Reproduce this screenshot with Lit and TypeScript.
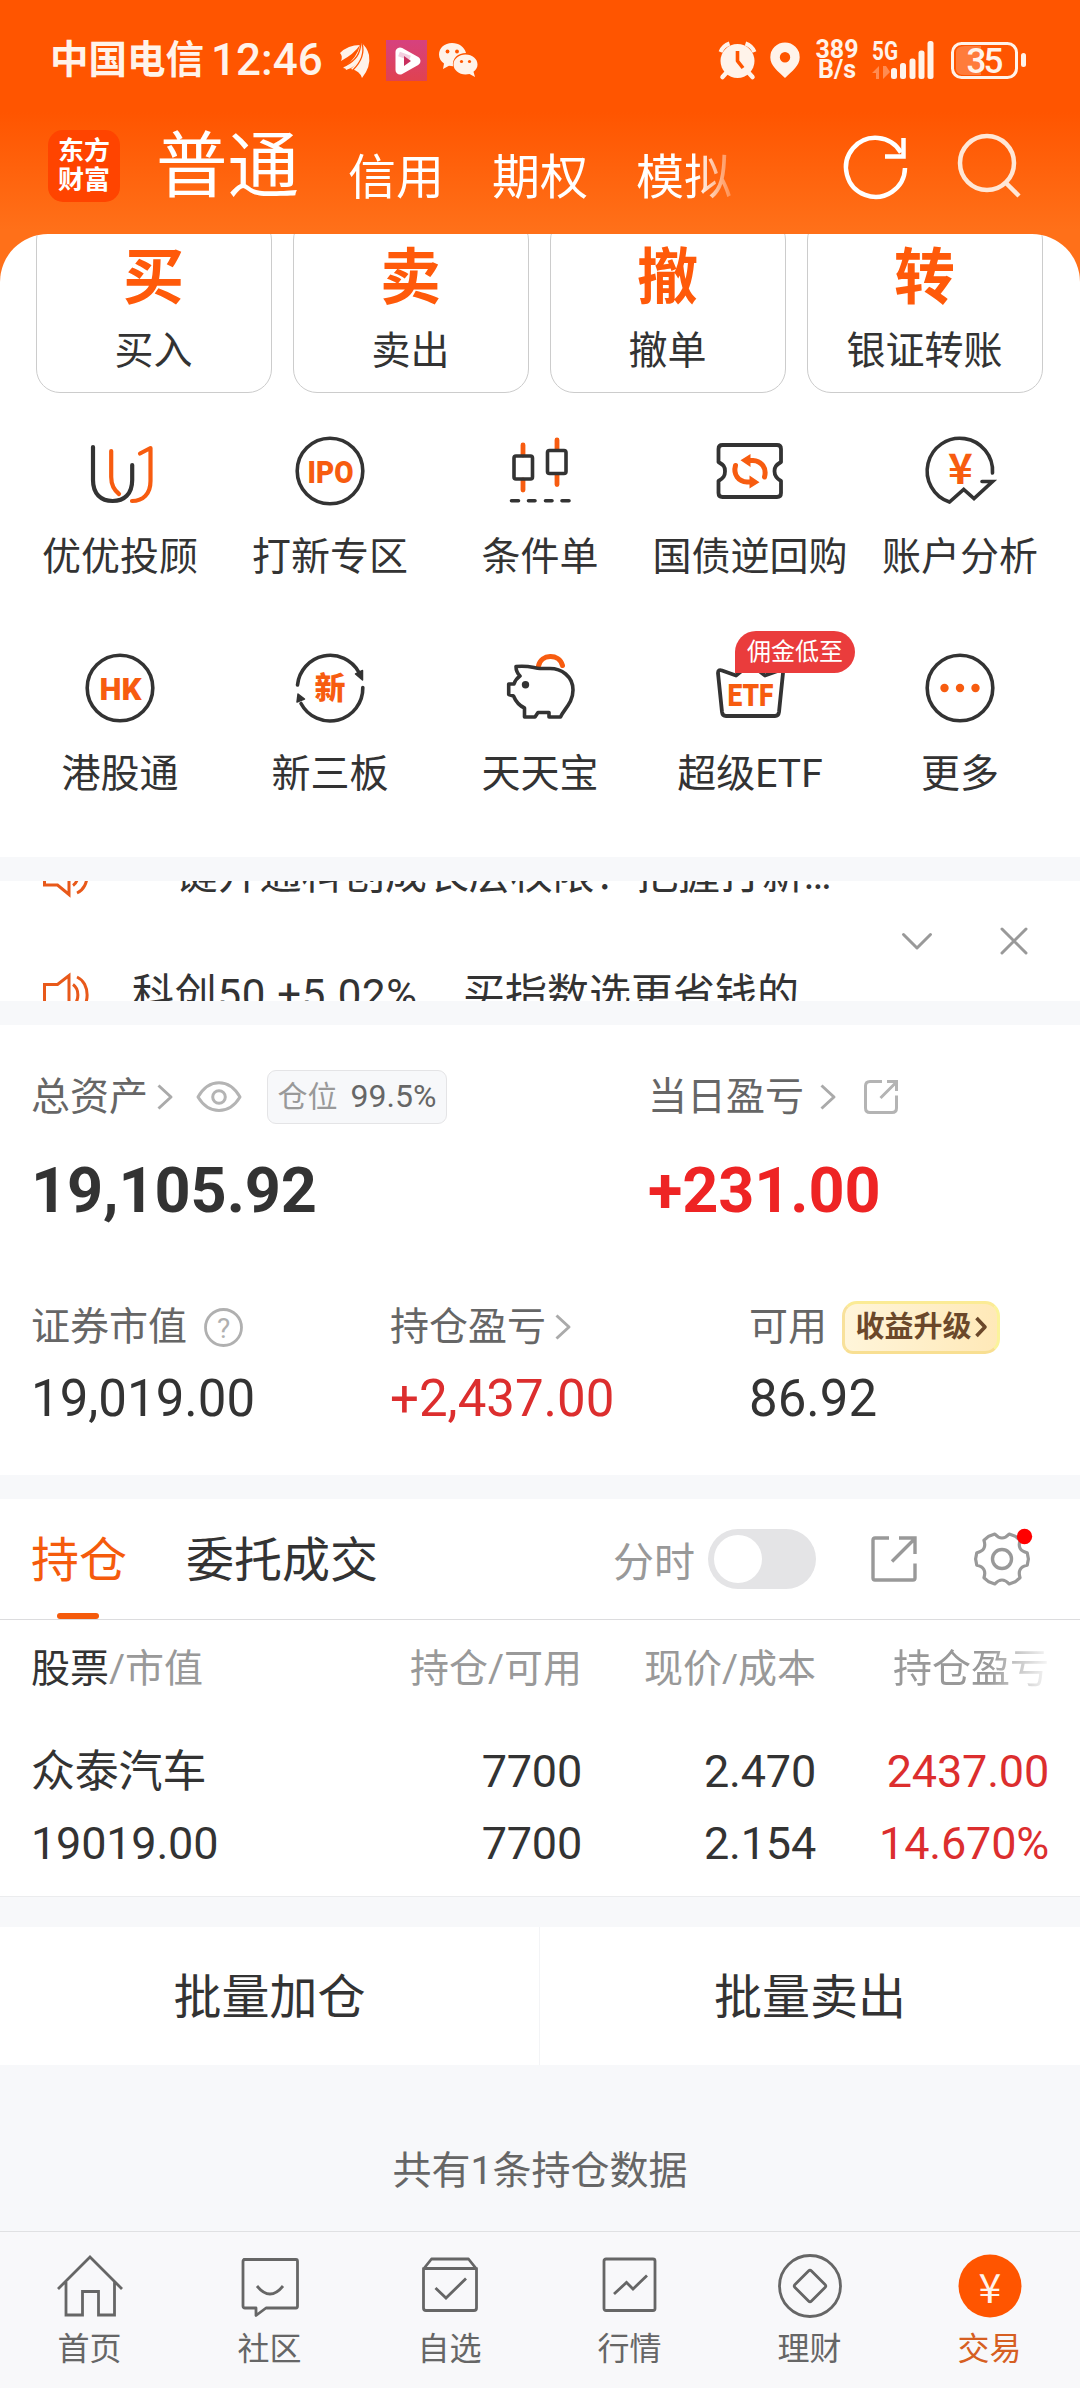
import { LitElement, html, svg, css, nothing, TemplateResult, SVGTemplateResult } from "lit";
import { customElement, property } from "lit/decorators.js";
import { classMap } from "lit/directives/class-map.js";

const base = css`
  :host {
    display: block;
    box-sizing: border-box;
    font-family: Roboto, "Noto Sans CJK SC", sans-serif;
    color: #333;
  }
  * {
    box-sizing: border-box;
  }
  svg {
    display: block;
    flex: none;
    fill: none;
    stroke-linecap: butt;
    stroke-linejoin: round;
    overflow: visible;
  }
  span {
    white-space: nowrap;
  }
`;

const glyph = (w: number, h: number, body: SVGTemplateResult, cls = ""): TemplateResult =>
  html`<svg class=${cls} width=${w} height=${h} viewBox="0 0 ${w} ${h}">${body}</svg>`;

const chevron = (color = "#aaa") =>
  glyph(16, 26, svg`<path d="M1.5 1.5 L14 13 L1.5 24.5" stroke=${color} stroke-width="3"/>`);

@customElement("status-bar")
export class StatusBar extends LitElement {
  static styles = [
    base,
    css`
      :host {
        display: flex;
        align-items: center;
        height: 120px;
        padding: 0 54px 0 50px;
        color: #fff3ea;
        --ink: #fff3ea;
      }
      .carrier {
        font-size: 38.5px;
        font-weight: 600;
        line-height: 60px;
      }
      .time {
        font-size: 44px;
        font-weight: 500;
        line-height: 60px;
        margin-left: 7px;
        width: 115px;
      }
      .wing { margin-left: 14px; }
      .play { margin-left: 16px; }
      .chat { margin-left: 12px; }
      .alarm { margin-left: auto; }
      .pin { margin-left: 14px; }
      .speed {
        display: flex;
        flex-direction: column;
        align-items: center;
        width: 46px;
        margin-left: 14px;
        font-size: 25px;
        font-weight: 700;
        line-height: 20px;
      }
      .signal { margin-left: 12px; }
      .battery { margin-left: 15px; }
      .net { font: 700 25px Roboto, sans-serif; fill: var(--ink); }
      .level { font: 500 35px Roboto, sans-serif; fill: var(--ink); }
    `,
  ];

  render() {
    const ink = "#fff3ea";
    return html`
      <span class="carrier">中国电信</span>
      <span class="time">12:46</span>
      ${glyph(30, 35, svg`<g fill=${ink}>
        <path d="M0 10 Q8 2 20 2 Q14 11 1 18 Q3 13 0 10Z"/>
        <path d="M3 25 Q17 16 20.500 .5 Q23 6 21 13 Q17 24 6 27 Q6 25 3 25Z"/>
        <path d="M11 26 Q22 16 21.500 0 Q27 4 29 12 Q31 24 22 35 Q20 28 11 26Z"/></g>
        <path d="M20.500 0 Q21 15 5 23 M22 0 Q26 14 13 27" stroke="#ff5500" stroke-width="1.300"/>`, "wing")}
      ${glyph(41, 41, svg`<defs><linearGradient id="pk" x1="0" y1="0" x2="0" y2="1"><stop offset="0" stop-color="#d6417f"/><stop offset="1" stop-color="#e04250"/></linearGradient></defs>
        <rect width="41" height="41" fill="url(#pk)"/>
        <path d="M14 12 V30 L30 21 Z" stroke="#fff" stroke-width="9"/>
        <path d="M13 14 L24 18" stroke="#f3cfe0" stroke-width="5"/>
        <path d="M18 16 V26 L25 21 Z" fill="#c9305f"/>`, "play")}
      ${glyph(39, 36, svg`<g fill=${ink}><path d="M13 1C5.500 1 0 6 0 12.500c0 4 2 7 5 9L4 27l6-3.200 4 .5C13 16 19 11 27 11 25.500 5 20 1 13 1Z"/>
        <path d="M26.500 12.500C20 12.500 14.500 17 14.500 22.500S20 32.500 26.500 32.500l4-.6 5.500 3-1.500-5.200c2.500-1.700 4-4.200 4-7.200 0-5.500-5-10-12-10Z"/></g>
        <g fill="#ff5500"><circle cx="8.500" cy="9.500" r="1.900"/><circle cx="18" cy="9.500" r="1.900"/><circle cx="22.500" cy="19.500" r="1.600"/><circle cx="30.500" cy="19.500" r="1.600"/></g>`, "chat")}
      ${glyph(37, 38, svg`<circle cx="18.500" cy="20" r="17" fill=${ink}/>
        <path d="M1.500 11 A15 15 0 0 1 10.500 2.500 M35.500 11 A15 15 0 0 0 26.500 2.500" stroke=${ink} stroke-width="4"/>
        <path d="M8 31 L3.500 36 M29 31 L33.500 36" stroke=${ink} stroke-width="4.500" stroke-linecap="round"/>
        <path d="M18.500 10 V20 L24 27" stroke="#ff5500" stroke-width="3.600"/>`, "alarm")}
      ${glyph(30, 36, svg`<path fill-rule="evenodd" fill=${ink} d="M15 .5A14.700 14.700 0 0 0 .3 15.200C.3 24 8 29 15 36 22 29 29.700 24 29.700 15.200A14.700 14.700 0 0 0 15 .5ZM15 10a5.200 5.200 0 1 1 0 10.400A5.200 5.200 0 0 1 15 10Z"/>`, "pin")}
      <div class="speed"><span>389</span><span>B/s</span></div>
      ${glyph(64, 38, svg`<text class="net" x="0" y="19" textLength="26" lengthAdjust="spacingAndGlyphs">5G</text>
        <g fill=${ink}><rect x="19" y="27" width="6" height="11" rx="2.500"/><rect x="28" y="22" width="6" height="16" rx="2.500"/><rect x="37.500" y="17.500" width="6" height="20.500" rx="2.500"/><rect x="46.500" y="9.500" width="6" height="28.500" rx="2.500"/><rect x="55.500" y="0" width="6" height="38" rx="2.500"/>
        <path opacity=".35" d="M0 32 L7 25 V38 H4 V32Z M11 25 H14 L18 31 L11 38Z"/></g>`, "signal")}
      ${glyph(75, 37, svg`<path d="M14 4 H30 V33 H14 Q5 33 5 27 V10 Q5 4 14 4Z" fill=${ink} opacity=".25"/>
        <rect x="1.500" y="1.500" width="64" height="34" rx="9" stroke=${ink} stroke-width="3"/>
        <rect x="70" y="11" width="5" height="14" rx="2.500" fill=${ink}/>
        <text class="level" x="34" y="31" text-anchor="middle" textLength="37">35</text>`, "battery")}
    `;
  }
}

@customElement("title-bar")
export class TitleBar extends LitElement {
  static styles = [
    base,
    css`
      :host {
        display: flex;
        height: 114px;
        padding: 0 59px 0 48px;
        color: #fff;
      }
      .logo {
        display: flex;
        flex-direction: column;
        justify-content: center;
        align-items: center;
        width: 72px;
        height: 72px;
        margin-top: 10px;
        border-radius: 15px;
        background: #ff4400;
        font-size: 26px;
        line-height: 29.5px;
        font-weight: 700;
      }
      .tabs {
        display: flex;
        align-items: flex-start;
        gap: 48px;
        margin: -5px 0 0 36px;
        width: 577px;
        height: 112px;
        -webkit-mask-image: linear-gradient(90deg, #000 540px, transparent 588px);
        mask-image: linear-gradient(90deg, #000 540px, transparent 588px);
      }
      .tab {
        font-size: 48px;
        line-height: 60px;
        padding: 33px 0 0 1px;
        margin-right: -1px;
      }
      .tab.on {
        font-size: 71.5px;
        line-height: 100px;
        padding: 2px 0 0;
        margin: 0;
      }
      .refresh { margin: 16px 0 0 auto; }
      .search { margin: 14px 0 0 51px; }
    `,
  ];

  render() {
    return html`
      <div class="logo"><span>东方</span><span>财富</span></div>
      <div class="tabs">
        <span class="tab on">普通</span>
        <span class="tab">信用</span>
        <span class="tab">期权</span>
        <span class="tab">模拟</span>
      </div>
      ${glyph(62, 62, svg`<path d="M60 32 A29.500 29.500 0 1 1 56 16.500" stroke="#fff" stroke-width="4.500"/><path d="M58.500 2 V20.500 H40" stroke="#fff" stroke-width="4.500" stroke-linejoin="miter"/>`, "refresh")}
      ${glyph(63, 63, svg`<circle cx="29" cy="29" r="27" stroke="#ffe7d6" stroke-width="4.500"/><path d="M47 48 L61 62" stroke="#ffe7d6" stroke-width="4.500"/>`, "search")}
    `;
  }
}

const INK = "#333";
const ORANGE = "#f75c10";

const FEATURE_ICONS: Record<string, SVGTemplateResult> = {
  advisor: svg`<g stroke-width="4.200" stroke-linecap="round">
    <path d="M13 16 V49 C13 63 21 70 32.600 70 S52.200 63 52.200 49 V34" stroke=${INK}/>
    <path d="M31.200 20 V46 C31.200 54 34 59 39 63 M52 70 C63 70 70.500 63 70.500 50 V17 L60 22.500" stroke=${ORANGE}/></g>`,
  ipo: svg`<circle cx="40" cy="40" r="32.800" stroke=${INK} stroke-width="3.600"/>
    <text class="word" x="17.500" y="51.500" textLength="46" lengthAdjust="spacingAndGlyphs">IPO</text>`,
  candle: svg`<g stroke=${ORANGE} stroke-width="4.800" stroke-linecap="round"><path d="M23 14 V24 M23 49 V59 M57 9 V18 M57 44 V53.500"/></g>
    <g stroke=${INK} stroke-width="3.600"><rect x="14" y="25" width="18.500" height="23" rx="2"/><rect x="47.500" y="19.500" width="18.500" height="23" rx="2"/></g>
    <path d="M11.500 69.700 H18.500 M28.500 69.700 H35 M45.500 69.700 H52 M62 69.700 H69" stroke=${INK} stroke-width="3.600" stroke-linecap="round"/>`,
  repo: svg`<path d="M12.500 14H67Q71 14 71 18V31C66 34 64.500 36 64.500 40.200S66 47 71 50V62Q71 66 67 66H12.500Q8.500 66 8.500 62V50C13.500 47 15 45 15 40.200S13.500 34 8.500 31V18Q8.500 14 12.500 14Z" stroke=${INK} stroke-width="3.800"/>
    <g stroke=${ORANGE} stroke-width="5" stroke-linecap="round"><path d="M38 29.500 H43 C51.500 30 57 37 54.500 46"/><path d="M42 51 H37 C28.500 50.500 23 43.500 25.500 34.500"/></g>
    <path fill=${ORANGE} d="M30.500 29.300 L40.500 23 V36Z M49.500 51.200 L39.500 57.500 V44.500Z"/>`,
  account: svg`<path d="M72.500 42 A32.700 32.700 0 1 0 29.500 71 L43.700 58.500 L54 67.500 L72.500 50.500 H62" stroke=${INK} stroke-width="3.600" stroke-linecap="round" stroke-linejoin="miter"/>
    <text class="yen" x="40.500" y="53" text-anchor="middle">¥</text>`,
  hk: svg`<circle cx="40" cy="40" r="32.800" stroke=${INK} stroke-width="3.600"/>
    <text class="word" x="19.500" y="51.500" textLength="42" lengthAdjust="spacingAndGlyphs">HK</text>`,
  neeq: svg`<path d="M7.500 37 A32.800 32.800 0 0 1 69 24.500 M72.800 39.500 A32.800 32.800 0 0 1 11 55.500" stroke=${INK} stroke-width="3.600" stroke-linecap="round"/>
    <path fill=${INK} stroke=${INK} stroke-width="1.500" d="M65.500 26 L72.500 22.500 L72.500 32Z M8 46 L7 54 L14.500 51Z"/>
    <text class="cjk" x="40" y="51" text-anchor="middle">新</text>`,
  piggy: svg`<path d="M38.500 18 C41 6 59 5 62.500 17.500" stroke=${ORANGE} stroke-width="5" stroke-linecap="round"/>
    <path d="M73 42 C73 28 61 20.500 50 20.500 H40 C34 20.500 30 17 16 18.500 C16 22 17 25 20 28 C17 30 15 33 14 36 H8.700 V46.500 L13.500 48 C16 54 20 58 24.500 60 V69 H35 L38 64.500 H49 V69 H60.500 C64 61 73 55 73 42Z" stroke=${INK} stroke-width="3.600"/>
    <circle cx="25.500" cy="36.700" r="3.700" fill=${INK}/>`,
  etf: svg`<path d="M8 25 Q8 21 12 22.500 L26 27.500 L40 16 L55 27.500 L69 22.500 Q73.500 21 73 25 L69 64 Q68.500 68 65 68 H16 Q12.500 68 12 64 Z" stroke=${INK} stroke-width="3.800"/>
    <text class="word" x="17.500" y="58" textLength="46" lengthAdjust="spacingAndGlyphs">ETF</text>`,
  more: svg`<circle cx="40" cy="40" r="32.800" stroke=${INK} stroke-width="3.600"/>
    <g fill=${ORANGE}><circle cx="24.500" cy="40" r="4.200"/><circle cx="40" cy="40" r="4.200"/><circle cx="55.500" cy="40" r="4.200"/></g>`,
};

@customElement("feature-panel")
export class FeaturePanel extends LitElement {
  static styles = [
    base,
    css`
      :host {
        height: 623px;
        overflow: hidden;
        border-radius: 48px 48px 0 0;
        background: #fff;
      }
      .cards {
        display: grid;
        grid-template-columns: repeat(4, 236px);
        gap: 21px;
        margin: -18px 0 0 36px;
      }
      .card {
        display: flex;
        flex-direction: column;
        align-items: center;
        height: 177px;
        padding: 21px 1px 0 0;
        border: 1px solid #ccc;
        border-radius: 24px;
      }
      .mark {
        font-size: 61px;
        line-height: 80px;
        font-weight: 600;
        color: #ff5a0a;
      }
      .label {
        font-size: 39px;
        line-height: 60px;
      }
      .card .label { margin-top: 3px; }
      .grid {
        display: grid;
        grid-template-columns: repeat(5, 210px);
        grid-auto-rows: 217px;
        padding: 38px 15px 0;
      }
      .cell {
        display: flex;
        flex-direction: column;
        align-items: center;
        position: relative;
        gap: 16px;
      }
      .flag {
        position: absolute;
        left: 90px;
        top: -17px;
        width: 120px;
        height: 42px;
        border-radius: 21px 21px 21px 0;
        background: #ea3c3c;
        color: #fff;
        font-size: 24px;
        line-height: 43px;
        text-align: center;
      }
      .word { font: 900 32px Roboto, sans-serif; fill: #f75c10; }
      .yen { font: 700 42px "Noto Sans CJK SC", sans-serif; fill: #f75c10; }
      .cjk { font: 900 31px "Noto Sans CJK SC", sans-serif; fill: #f75c10; }
    `,
  ];

  private cards = [["买", "买入"], ["卖", "卖出"], ["撤", "撤单"], ["转", "银证转账"]];
  private features = [
    ["advisor", "优优投顾"], ["ipo", "打新专区"], ["candle", "条件单"], ["repo", "国债逆回购"], ["account", "账户分析"],
    ["hk", "港股通"], ["neeq", "新三板"], ["piggy", "天天宝"], ["etf", "超级ETF", "佣金低至"], ["more", "更多"],
  ];

  render() {
    return html`
      <div class="cards">
        ${this.cards.map(([m, l]) => html`<div class="card"><span class="mark">${m}</span><span class="label">${l}</span></div>`)}
      </div>
      <div class="grid">
        ${this.features.map(([k, l, flag]) => html`<div class="cell">
          ${glyph(80, 80, FEATURE_ICONS[k])}
          <span class="label">${l}</span>
          ${flag ? html`<span class="flag">${flag}</span>` : nothing}
        </div>`)}
      </div>
    `;
  }
}

@customElement("notice-ticker")
export class NoticeTicker extends LitElement {
  static styles = [
    base,
    css`
      :host {
        display: flex;
        justify-content: space-between;
        height: 120px;
        overflow: hidden;
        background: #fff;
      }
      .lines { margin-top: -66px; }
      .line {
        display: flex;
        align-items: center;
        height: 120px;
        padding-left: 43px;
        font-size: 42px;
        line-height: 60px;
      }
      .line svg { margin-right: 43px; }
      .first span {
        margin-left: 2px;
        letter-spacing: -0.15px;
      }
      .quote {
        letter-spacing: 0.7px;
        width: 331px;
      }
      .actions {
        display: flex;
        align-items: center;
        gap: 68px;
        padding-right: 52px;
      }
    `,
  ];

  render() {
    const speaker = glyph(46, 42, svg`<g stroke="#e8591a" stroke-width="3">
      <path d="M1.500 10.500 H14.500 L26 1.500 V40.500 L14.500 31 H1.500 Z" stroke-linejoin="miter"/>
      <path d="M30 10.500 C36.500 15 36.500 27 30 31.500 M34 3 C47.500 9 47.500 33 34 39"/></g>`);
    return html`
      <div class="lines">
        <div class="line first">${speaker}<span>一键开通科创成长层权限！把握打新…</span></div>
        <div class="line">${speaker}<span class="quote">科创50 +5.02%</span><span>买指数选更省钱的</span></div>
      </div>
      <div class="actions">
        ${glyph(30, 17, svg`<path d="M1.500 1.500 L15 15 L28.500 1.500" stroke="#999" stroke-width="3" stroke-linecap="round"/>`)}
        ${glyph(28, 28, svg`<path d="M2 2 L26 26 M26 2 L2 26" stroke="#999" stroke-width="3" stroke-linecap="round"/>`)}
      </div>
    `;
  }
}

@customElement("asset-summary")
export class AssetSummary extends LitElement {
  static styles = [
    base,
    css`
      :host {
        height: 450px;
        padding: 42px 0 0 31px;
        background: #fff;
      }
      .top {
        display: grid;
        grid-template-columns: 617px 1fr;
      }
      .bottom {
        display: grid;
        grid-template-columns: 359px 359px 1fr;
        margin-top: 66px;
      }
      .head {
        display: flex;
        align-items: center;
        height: 60px;
        font-size: 39px;
        line-height: 60px;
        color: #666;
      }
      .eye { margin-left: 23px; }
      .ratio {
        display: flex;
        justify-content: center;
        gap: 13px;
        width: 180px;
        height: 54px;
        margin: 0 0 0 25px;
        border: 1px solid #e4e4e6;
        border-radius: 9px;
        background: #f7f8fa;
        font-size: 32px;
        line-height: 50px;
      }
      .ratio .k {
        font-size: 30px;
        line-height: 52px;
        color: #999;
      }
      .big {
        font-size: 63px;
        font-weight: 700;
        line-height: 80px;
        margin-top: 24px;
        letter-spacing: -0.1px;
      }
      .mid {
        font-size: 51px;
        line-height: 70px;
        margin-top: 7px;
      }
      .big.up { color: #ee2424; }
      .mid.up { color: #dc2e2e; }
      .c9 { margin-left: 9px; }
      .c16 { margin-left: 16px; }
      .share { margin-left: 28px; }
      .help { margin-left: 17px; }
      .q { font: 400 28px Roboto, sans-serif; fill: #b0b0b0; }
      .boost {
        display: flex;
        align-items: center;
        justify-content: center;
        gap: 3px;
        width: 158px;
        height: 53px;
        margin-left: 15px;
        border: 3px solid #f9e08f;
        border-color: #fbeb95 #fbf39b #f8df92 #f8e19b;
        border-radius: 15px 15px 15px 11px;
        background: linear-gradient(90deg, #fff5da, #ffe9b8);
        font-size: 29px;
        font-weight: 700;
        line-height: 47px;
        color: #6b482a;
      }
    `,
  ];

  render() {
    return html`
      <div class="top">
        <div>
          <div class="head">
            <span>总资产</span>
            <span class="c9">${chevron()}</span>
            ${glyph(46, 32, svg`<path d="M2 16 C13 -3 33 -3 44 16 C33 34 13 34 2 16Z" stroke="#b4b4b4" stroke-width="3"/><circle cx="23" cy="16" r="6.300" stroke="#b4b4b4" stroke-width="3"/>`, "eye")}
            <div class="ratio"><span class="k">仓位</span><span>99.5%</span></div>
          </div>
          <div class="big">19,105.92</div>
        </div>
        <div>
          <div class="head">
            <span>当日盈亏</span>
            <span class="c16">${chevron()}</span>
            ${glyph(34, 34, svg`<g stroke="#b4b4b4" stroke-width="3"><path d="M18 1.500 H6 Q1.500 1.500 1.500 6 V28 Q1.500 32.500 6 32.500 H28 Q32.500 32.500 32.500 28 V15.500"/><path d="M16.500 18 L32 2.500 M23 1.500 H32.500 V11" stroke-linejoin="miter"/></g>`, "share")}
          </div>
          <div class="big up">+231.00</div>
        </div>
      </div>
      <div class="bottom">
        <div>
          <div class="head">
            <span>证券市值</span>
            ${glyph(39, 39, svg`<circle cx="19.500" cy="19.500" r="18" stroke="#b0b0b0" stroke-width="2.800"/><text class="q" x="19.500" y="29.500" text-anchor="middle">?</text>`, "help")}
          </div>
          <div class="mid">19,019.00</div>
        </div>
        <div>
          <div class="head"><span>持仓盈亏</span><span class="c9">${chevron()}</span></div>
          <div class="mid up">+2,437.00</div>
        </div>
        <div>
          <div class="head">
            <span>可用</span>
            <div class="boost"><span>收益升级</span>${glyph(12, 20, svg`<path d="M1.500 1 L10 10 L1.500 19" stroke="#6b482a" stroke-width="3.600"/>`)}</div>
          </div>
          <div class="mid">86.92</div>
        </div>
      </div>
    `;
  }
}

/* Six-lobed cog outline: flat lobes every 60 degrees joined by concave arcs. */
const cogPath = (c: number, outer: number, dip: number): string => {
  const at = (deg: number, r: number) => {
    const a = (deg * Math.PI) / 180;
    return `${(c + r * Math.cos(a)).toFixed(2)} ${(c + r * Math.sin(a)).toFixed(2)}`;
  };
  let d = `M${at(-14, outer)}`;
  for (let k = 0; k < 6; k++) {
    const a = k * 60;
    d += `L${at(a, outer + 0.4)}L${at(a + 14, outer)}Q${at(a + 30, dip)} ${at(a + 46, outer)}`;
  }
  return d + "Z";
};

@customElement("holdings-table")
export class HoldingsTable extends LitElement {
  static styles = [
    base,
    css`
      :host {
        background: #fff;
        height: 398px;
        border-bottom: 1px solid #ebecee;
      }
      .bar {
        display: flex;
        align-items: center;
        height: 121px;
        padding: 0 51px 0 31px;
        border-bottom: 1px solid #dcdcde;
      }
      .tab {
        position: relative;
        height: 120px;
        font-size: 48px;
        line-height: 123px;
        margin-right: 59px;
      }
      .tab.on { color: #f55b0c; }
      .tab.on::after {
        content: "";
        position: absolute;
        left: 26px;
        bottom: 0;
        width: 42px;
        height: 6px;
        border-radius: 3px;
        background: #f55b0c;
      }
      .minute {
        margin-left: auto;
        font-size: 41px;
        color: #999;
      }
      .switch {
        width: 108px;
        height: 60px;
        margin-left: 13px;
        padding: 6px;
        border-radius: 30px;
        background: #e4e4e6;
      }
      .knob {
        width: 48px;
        height: 48px;
        border-radius: 50%;
        background: #fff;
      }
      .share { margin-left: 55px; }
      .cog { margin-left: 58px; }
      .row {
        display: grid;
        grid-template-columns: 251px 300px 234px 233px;
        padding-left: 31px;
        text-align: right;
        height: 72px;
        line-height: 72px;
        font-size: 45px;
        letter-spacing: -0.2px;
      }
      .row > :first-child { text-align: left; }
      .head {
        height: 98px;
        line-height: 99px;
        font-size: 39px;
        letter-spacing: 0;
        color: #999;
      }
      .head b { font-weight: 400; color: #333; }
      .head .fade {
        -webkit-mask-image: linear-gradient(90deg, #000 172px, transparent 238px);
        mask-image: linear-gradient(90deg, #000 172px, transparent 238px);
      }
      .body { padding-top: 17.5px; }
      .name { font-size: 44px; }
      .up { color: #dc2e2e; }
    `,
  ];

  render() {
    return html`
      <div class="bar">
        <span class="tab on">持仓</span>
        <span class="tab">委托成交</span>
        <span class="minute">分时</span>
        <div class="switch"><div class="knob"></div></div>
        ${glyph(46, 46, svg`<g stroke="#999" stroke-width="3.400"><path d="M18 2 H4 Q2 2 2 4 V42 Q2 44 4 44 H42 Q44 44 44 42 V27.500"/><path d="M21 25.500 L43.500 3 M28 2 H44 V18" stroke-linejoin="miter"/></g>`, "share")}
        ${glyph(54, 54, svg`<path d=${cogPath(27, 26, 17)} stroke="#999" stroke-width="3.200"/><circle cx="27" cy="27" r="9.500" stroke="#999" stroke-width="3.400"/><circle cx="49.500" cy="4.500" r="7.700" fill="#f00"/>`, "cog")}
      </div>
      <div class="row head">
        <span><b>股票</b>/市值</span><span>持仓/可用</span><span>现价/成本</span><span class="fade">持仓盈亏</span>
      </div>
      <div class="body">
        <div class="row"><span class="name">众泰汽车</span><span>7700</span><span>2.470</span><span class="up">2437.00</span></div>
        <div class="row"><span>19019.00</span><span>7700</span><span>2.154</span><span class="up">14.670%</span></div>
      </div>
    `;
  }
}

const NAV_ICONS: Record<string, SVGTemplateResult> = {
  home: svg`<path d="M1 35 L33 3 L65 35 M9 28 V61 H25.500 V37.500 H41.500 V61 H57.500 V28" stroke-linejoin="miter"/>`,
  community: svg`<path d="M7 5.500 H59 Q60.500 5.500 60.500 7.500 V52 Q60.500 54 59 54 H29 L19 61.500 V54 H8 Q6 54 6 52 V7.500 Q6 5.500 8 5.500Z"/><path d="M20 32 Q33 48 46 32"/>`,
  watch: svg`<path d="M6.500 15 L14.500 5 H51.500 L59.500 15 M6.500 14.500 H59.500 V54 Q59.500 56.500 57 56.500 H9 Q6.500 56.500 6.500 54Z"/><path d="M18.500 34 L29 44 L49 24.500" stroke-linejoin="miter"/>`,
  market: svg`<rect x="7" y="5" width="51" height="51.500" rx="2"/><path d="M17 40 L29.500 28.500 L36 35 L50 21.500" stroke-linejoin="miter"/>`,
  wealth: svg`<circle cx="33" cy="32" r="30.500"/><path d="M31.500 17 Q33 15.500 34.500 17 L48 30.500 Q49.500 32 48 33.500 L34.500 47 Q33 48.500 31.500 47 L18 33.500 Q16.500 32 18 30.500Z"/>`,
  trade: svg`<circle cx="33" cy="32" r="31.500" fill="#ff5500" stroke="none"/><text class="yen" x="33" y="48.500" text-anchor="middle">¥</text>`,
};

@customElement("nav-item")
export class NavItem extends LitElement {
  static styles = [
    base,
    css`
      :host {
        display: flex;
        flex-direction: column;
        align-items: center;
        padding: 22px 1px 0 0;
      }
      .icon {
        stroke: #666;
        stroke-width: 2.8px;
      }
      .label {
        margin-top: 11px;
        font-size: 32px;
        line-height: 40px;
        color: #666;
      }
      .label.on { color: #d65f22; }
      .yen { font: 400 41px "Noto Sans CJK SC", sans-serif; fill: #fff3ea; stroke: none; }
    `,
  ];

  @property() icon = "home";
  @property() label = "";
  @property({ type: Boolean }) active = false;

  render() {
    return html`${glyph(66, 64, NAV_ICONS[this.icon], "icon")}
      <span class=${classMap({ label: true, on: this.active })}>${this.label}</span>`;
  }
}

@customElement("app-root")
export class AppRoot extends LitElement {
  static styles = [
    base,
    css`
      :host {
        display: flex;
        flex-direction: column;
        width: 1080px;
        height: 2388px;
        overflow: hidden;
        background: #f7f8fa;
      }
      .hero {
        height: 290px;
        margin-bottom: -56px;
        flex: none;
        background: linear-gradient(180deg, #ff5500 0, #ff5500 112px, #ff7019 230px, #ff7019 100%);
      }
      .stack {
        display: flex;
        flex-direction: column;
        gap: 24px;
        position: relative;
      }
      .batch {
        display: grid;
        grid-template-columns: 539px 541px;
        height: 138px;
        margin-top: 30px;
        background: #fff;
        font-size: 48px;
        line-height: 141px;
        text-align: center;
      }
      .batch span { height: 138px; }
      .batch span + span { border-left: 1px solid #f3f4f6; }
      .total {
        height: 166px;
        padding-top: 76px;
        text-align: center;
        font-size: 39px;
        line-height: 60px;
        color: #666;
      }
      .nav {
        display: grid;
        grid-template-columns: repeat(6, 1fr);
        height: 157px;
        border-top: 1px solid #e0e1e3;
        background: #f8f8fa;
      }
    `,
  ];

  render() {
    return html`
      <div class="hero">
        <status-bar></status-bar>
        <title-bar></title-bar>
      </div>
      <div class="stack">
        <feature-panel></feature-panel>
        <notice-ticker></notice-ticker>
        <asset-summary></asset-summary>
        <holdings-table></holdings-table>
      </div>
      <div class="batch"><span>批量加仓</span><span>批量卖出</span></div>
      <div class="total">共有1条持仓数据</div>
      <div class="nav">
        <nav-item icon="home" label="首页"></nav-item>
        <nav-item icon="community" label="社区"></nav-item>
        <nav-item icon="watch" label="自选"></nav-item>
        <nav-item icon="market" label="行情"></nav-item>
        <nav-item icon="wealth" label="理财"></nav-item>
        <nav-item icon="trade" label="交易" active></nav-item>
      </div>
    `;
  }
}
